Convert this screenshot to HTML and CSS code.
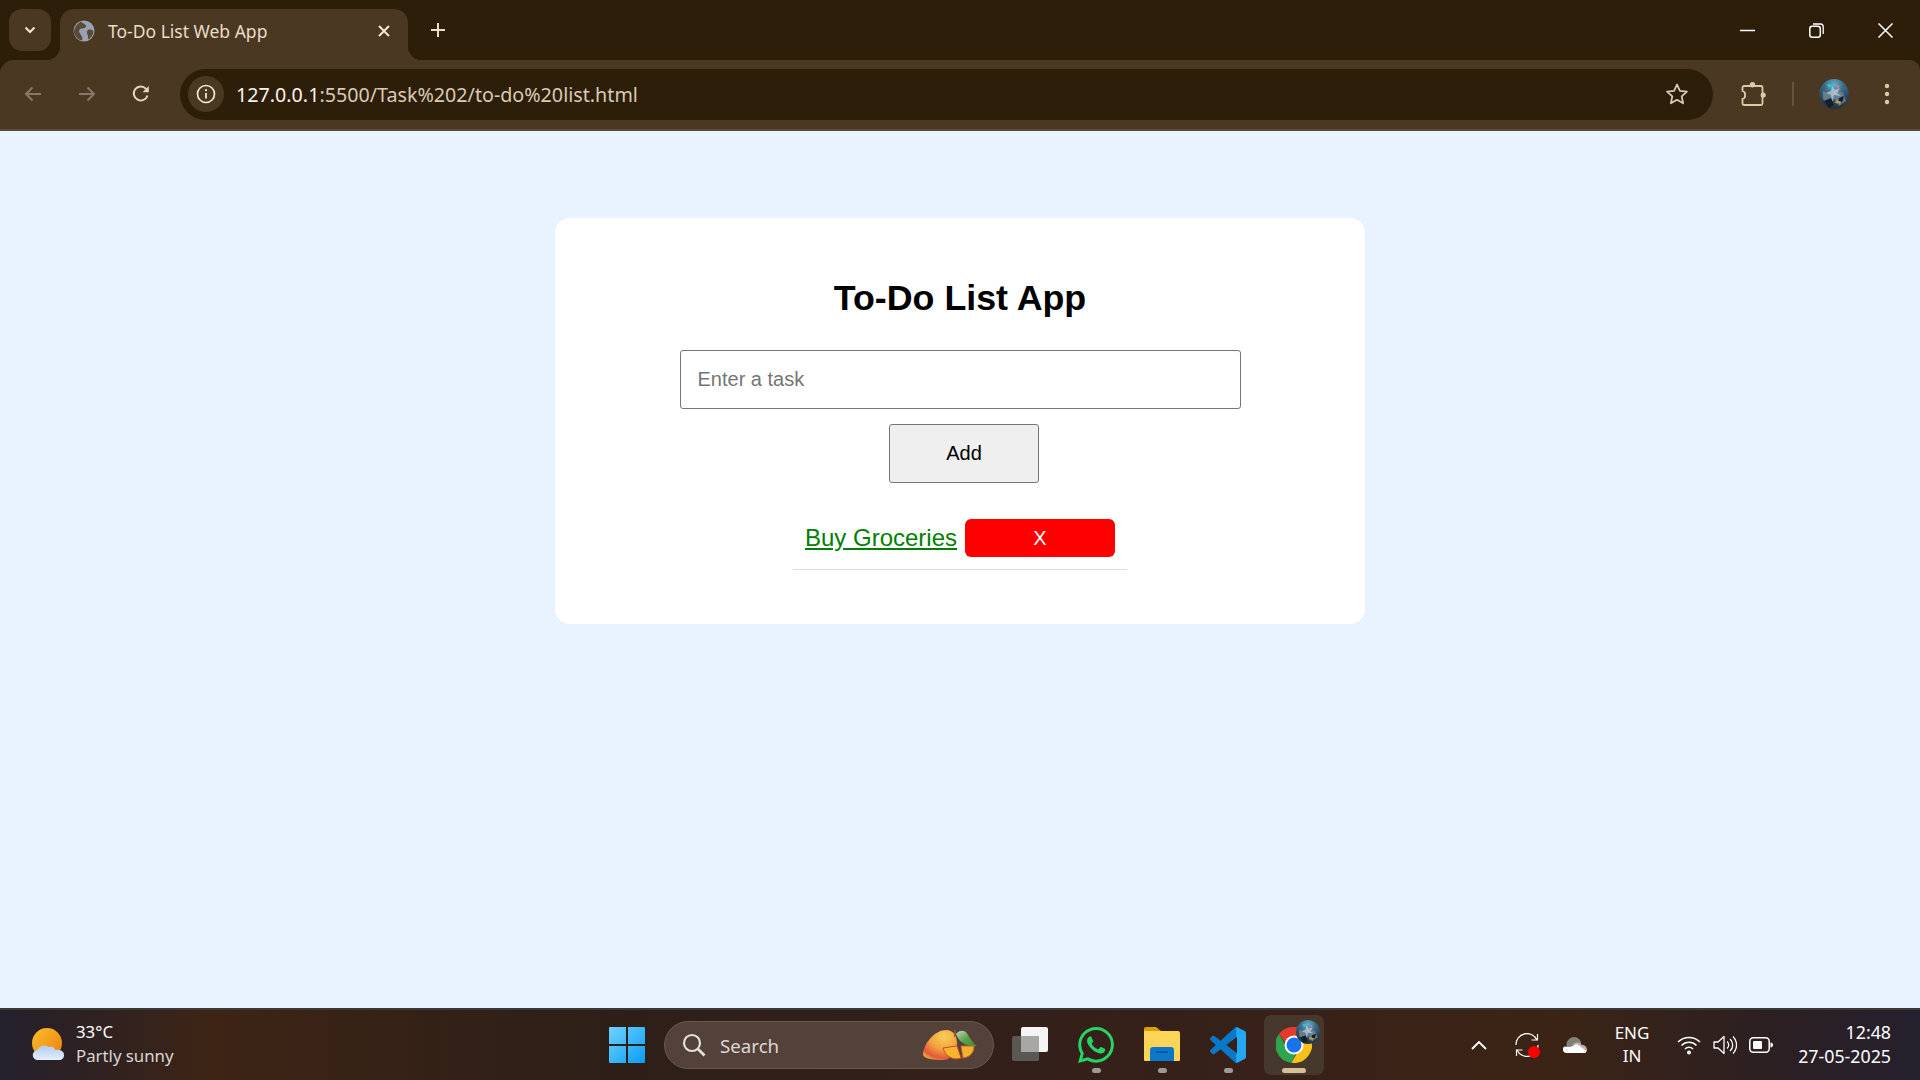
FILE: index.html
```html
<!DOCTYPE html>
<html lang="en">
<head>
  <meta charset="UTF-8">
  <meta name="viewport" content="width=device-width, initial-scale=1">
  <title>To-Do List Web App</title>
  <link rel="stylesheet" href="styles.css">
</head>
<body>
  <svg class="defs" width="0" height="0">
    <defs>
      <radialGradient id="avatarBg" cx="50%" cy="20%" r="85%">
        <stop offset="0" stop-color="#5fb4cc"/>
        <stop offset="0.4" stop-color="#3c6781"/>
        <stop offset="1" stop-color="#1b2835"/>
      </radialGradient>
      <linearGradient id="sunFill" x1="0" y1="0" x2="1" y2="1">
        <stop offset="0" stop-color="#fbc02d"/>
        <stop offset="1" stop-color="#ee7d0b"/>
      </linearGradient>
      <linearGradient id="cloudFill" x1="0" y1="0" x2="0" y2="1">
        <stop offset="0" stop-color="#b0cdf3"/>
        <stop offset="1" stop-color="#e4effc"/>
      </linearGradient>
      <linearGradient id="winFill" x1="0" y1="0" x2="1" y2="1">
        <stop offset="0" stop-color="#6fd3ff"/>
        <stop offset="1" stop-color="#0a9cf5"/>
      </linearGradient>
      <radialGradient id="mangoFill" cx="62%" cy="22%" r="85%">
        <stop offset="0" stop-color="#f7cf55"/>
        <stop offset="0.5" stop-color="#f3a13e"/>
        <stop offset="0.85" stop-color="#e4583a"/>
        <stop offset="1" stop-color="#e9a23a"/>
      </radialGradient>
      <linearGradient id="leafFill" x1="0" y1="0" x2="1" y2="1">
        <stop offset="0" stop-color="#c9d6c4"/>
        <stop offset="0.5" stop-color="#5aa24a"/>
        <stop offset="1" stop-color="#3f8f3a"/>
      </linearGradient>
      <linearGradient id="codeFill" x1="0" y1="0" x2="1" y2="0">
        <stop offset="0" stop-color="#0a78c9"/>
        <stop offset="0.72" stop-color="#0a78c9"/>
        <stop offset="0.74" stop-color="#22a7f2"/>
        <stop offset="1" stop-color="#22a7f2"/>
      </linearGradient>
      <symbol id="avatar" viewBox="0 0 30 30">
        <circle cx="15" cy="15" r="15" fill="url(#avatarBg)"/>
        <path d="M4 12l8 4 5-6 7 4 3 8-7 5-4-7-7 6-5-6z" fill="#75899a" opacity=".75"/>
        <path d="M13 7l3 4 5-2-3 5 4 3-7-1-2 7-1-7-5-2 5-2z" fill="#c3ced7" opacity=".75"/>
        <path d="M5 22l7-3 3 7-5 3zM20 19l5-2-2 7-4 1z" fill="#151f2a"/>
        <path d="M17 21l6 2-2 2-5-1z" fill="#b59a5c"/>
        <circle cx="19" cy="7.500" r="1.400" fill="#e86aa0"/>
        <path d="M8 5l6 1-4 3z" fill="#39c2dc"/>
      </symbol>
    </defs>
  </svg>

  <div class="browser-top">
    <div class="tabstrip">
      <button class="tab-menu">
        <svg width="14" height="14" viewBox="0 0 14 14"><path d="M2.5 4.5L7 9l4.5-4.5" fill="none" stroke="#f3e7d6" stroke-width="2"/></svg>
      </button>
      <div class="tab">
        <svg class="favicon" width="22" height="22" viewBox="0 0 22 22">
          <circle cx="11" cy="11" r="10.500" fill="#98a3b0"/>
          <path d="M8 1.500c1 2 4 2 5 4s-2 3-4 3-4 2-2 5 3 4 2 7c-2 0-6-3-7.500-6S2 5 8 1.500zM15 10c2-1 4 0 5.500 1 0 3-2 6.500-5 8.500-1-2 0-3-1-5s-1-4 .5-4.500z" fill="#5a4a3a"/>
        </svg>
        <span class="tab-title">To-Do List Web App</span>
        <svg class="tab-close" width="12" height="12" viewBox="0 0 12 12"><path d="M1 1l10 10M11 1L1 11" stroke="#f3e7d6" stroke-width="2"/></svg>
      </div>
      <button class="new-tab">
        <svg width="16" height="16" viewBox="0 0 16 16"><path d="M8 1v14M1 8h14" stroke="#eadcc8" stroke-width="2"/></svg>
      </button>
      <div class="window-controls">
        <svg width="15" height="15" viewBox="0 0 15 15"><path d="M0 7.500h15" stroke="#fff" stroke-width="1.500"/></svg>
        <svg width="15" height="15" viewBox="0 0 15 15"><rect x=".8" y="3.300" width="10.500" height="10.900" rx="2.500" fill="none" stroke="#fff" stroke-width="1.500"/><path d="M4 1h7.500A2.800 2.800 0 0 1 14.200 3.800V11" fill="none" stroke="#fff" stroke-width="1.300"/></svg>
        <svg width="15" height="15" viewBox="0 0 15 15"><path d="M.5.500l14 14M14.500.500l-14 14" stroke="#fff" stroke-width="1.500"/></svg>
      </div>
    </div>

    <div class="toolbar">
      <div class="nav-btn">
        <svg width="20" height="20" viewBox="0 0 20 20"><path d="M18 10H3M9.500 3.500L3 10l6.500 6.500" fill="none" stroke="#87786a" stroke-width="2"/></svg>
      </div>
      <div class="nav-btn">
        <svg width="20" height="20" viewBox="0 0 20 20"><path d="M2 10h15M10.500 3.500L17 10l-6.500 6.500" fill="none" stroke="#87786a" stroke-width="2"/></svg>
      </div>
      <div class="nav-btn">
        <svg width="20" height="20" viewBox="0 0 20 20"><path d="M16.500 11.500A7 7 0 1 1 15 4.800L17 7" fill="none" stroke="#e6d3ba" stroke-width="2"/><path d="M17.800 2v6.300h-6.300z" fill="#e6d3ba"/></svg>
      </div>
      <div class="omnibox">
        <div class="site-chip">
          <svg width="20" height="20" viewBox="0 0 20 20"><circle cx="10" cy="10" r="8.500" fill="none" stroke="#f3e7d6" stroke-width="1.700"/><path d="M10 9v5.500" stroke="#f3e7d6" stroke-width="1.800"/><circle cx="10" cy="6.200" r="1.100" fill="#f3e7d6"/></svg>
        </div>
        <div class="url"><span class="url-host">127.0.0.1</span>:5500/Task%202/to-do%20list.html</div>
        <svg class="star" width="24" height="24" viewBox="0 0 24 24"><path d="M12 2.500l2.900 6.400 7 .8-5.200 4.700 1.400 6.900-6.100-3.500-6.100 3.500 1.400-6.900-5.200-4.700 7-.8z" fill="none" stroke="#d8c9b6" stroke-width="1.800" stroke-linejoin="round"/></svg>
      </div>
      <div class="toolbar-actions">
        <svg width="26" height="26" viewBox="0 0 26 26">
          <path d="M4 5h17a1.500 1.500 0 0 1 1.500 1.500v16a1.500 1.500 0 0 1-1.500 1.500H4a1.500 1.500 0 0 1-1.500-1.500V18a3.500 3.500 0 0 0 2.500-4 3.500 3.500 0 0 0-2.500-4V6.500A1.500 1.500 0 0 1 4 5z" fill="none" stroke="#e0c7a6" stroke-width="1.800"/>
          <circle cx="12.500" cy="3.800" r="2.700" fill="#e0c7a6"/>
          <circle cx="23.200" cy="14" r="2.600" fill="#e0c7a6"/>
        </svg>
        <span class="toolbar-divider"></span>
        <svg class="profile" width="30" height="30"><use href="#avatar"/></svg>
        <svg width="6" height="22" viewBox="0 0 6 22"><circle cx="3" cy="3" r="2.200" fill="#e0c7a6"/><circle cx="3" cy="11" r="2.200" fill="#e0c7a6"/><circle cx="3" cy="19" r="2.200" fill="#e0c7a6"/></svg>
      </div>
    </div>
  </div>

  <main class="page">
    <div class="card">
      <h1>To-Do List App</h1>
      <input class="task-input" type="text" placeholder="Enter a task">
      <button class="add-btn">Add</button>
      <ul class="task-list">
        <li>
          <span class="task-text">Buy Groceries</span>
          <button class="delete-btn">X</button>
        </li>
      </ul>
    </div>
  </main>

  <footer class="taskbar">
    <div class="weather">
      <svg width="36" height="36" viewBox="0 0 36 36">
        <circle cx="17" cy="16" r="15" fill="url(#sunFill)"/>
        <path d="M8 33a5 5 0 0 1-.5-10c1.500-4 7-6 11-3 3-1.500 6 0 6.500 3 6-1 9.500 2 9 5.500 0 2.500-2 4.500-4.500 4.500z" fill="url(#cloudFill)"/>
      </svg>
      <div class="weather-text">
        <div class="temp">33°C</div>
        <div class="sky">Partly sunny</div>
      </div>
    </div>

    <div class="task-icons">
      <svg class="win-logo" width="36" height="36" viewBox="0 0 36 36">
        <path d="M1 0h16v17H0V1a1 1 0 0 1 1-1zM19 0h16a1 1 0 0 1 1 1v16H19zM0 19h17v17H1a1 1 0 0 1-1-1zM19 19h17v16a1 1 0 0 1-1 1H19z" fill="url(#winFill)"/>
      </svg>
      <div class="search-box">
        <svg width="24" height="24" viewBox="0 0 24 24"><circle cx="10" cy="10" r="8" fill="none" stroke="#e4e0dc" stroke-width="2.200"/><path d="M16 16l6.500 6.500" stroke="#e4e0dc" stroke-width="2.600"/></svg>
        <span class="search-label">Search</span>
        <svg class="mango" width="58" height="32" viewBox="0 0 58 32">
          <path d="M1 24C3 12 14 1 24 1c8 0 11 7 11 14 0 10-6 15-14 16C11 31 0 30 1 24z" fill="url(#mangoFill)"/>
          <path d="M34 5c4-5 10-4 12 1 2 4 7 10 9 11-9 1-18-3-21-12z" fill="url(#leafFill)"/>
          <path d="M32 1l1.500 0 .5 6-2 1z" fill="#8a5a2a"/>
          <path d="M21 19l14-2 4 12c-8 3-16-2-18-10z" fill="#f6b52c" stroke="#d9482a" stroke-width="1"/>
          <path d="M39 17h13c0 7-4 11-11 12z" fill="#f2b02d" stroke="#c9612a" stroke-width="1"/>
        </svg>
      </div>
      <svg class="task-view" width="36" height="36" viewBox="0 0 36 36">
        <rect x="0" y="9" width="27" height="25" rx="2" fill="#5a5755"/>
        <rect x="9" y="0" width="27" height="25" rx="2" fill="#f4f4f4"/>
        <rect x="9" y="9" width="18" height="16" fill="#a9a7a5"/>
      </svg>
      <div class="app-icon has-dot">
        <svg width="36" height="36" viewBox="0 0 24 24"><path fill="#25d366" d="M17.472 14.382c-.297-.149-1.758-.867-2.030-.967-.273-.099-.471-.148-.67.150-.197.297-.767.966-.940 1.164-.173.199-.347.223-.644.075-.297-.150-1.255-.463-2.390-1.475-.883-.788-1.480-1.761-1.653-2.059-.173-.297-.018-.458.130-.606.134-.133.298-.347.446-.520.149-.174.198-.298.298-.497.099-.198.050-.371-.025-.520-.075-.149-.669-1.612-.916-2.207-.242-.579-.487-.500-.669-.510-.173-.008-.371-.010-.570-.010-.198 0-.520.074-.792.372-.272.297-1.040 1.016-1.040 2.479 0 1.462 1.065 2.875 1.213 3.074.149.198 2.096 3.200 5.077 4.487.709.306 1.262.489 1.694.625.712.227 1.360.195 1.871.118.571-.085 1.758-.719 2.006-1.413.248-.694.248-1.289.173-1.413-.074-.124-.272-.198-.570-.347m-5.421 7.403h-.004a9.870 9.870 0 01-5.031-1.378l-.361-.214-3.741.982.998-3.648-.235-.374a9.860 9.860 0 01-1.510-5.260c.001-5.450 4.436-9.884 9.888-9.884 2.640 0 5.122 1.030 6.988 2.898a9.825 9.825 0 012.893 6.994c-.003 5.450-4.437 9.884-9.885 9.884m8.413-18.297A11.815 11.815 0 0012.050 0C5.495 0 .160 5.335.157 11.892c0 2.096.547 4.142 1.588 5.945L.057 24l6.305-1.654a11.882 11.882 0 005.683 1.448h.005c6.554 0 11.890-5.335 11.893-11.893a11.821 11.821 0 00-3.480-8.413Z"/></svg>
      </div>
      <div class="app-icon has-dot">
        <svg width="36" height="36" viewBox="0 0 36 36">
          <path d="M0 2a2 2 0 0 1 2-2h10l5 4h-17z" fill="#d99e0b"/>
          <path d="M0 4h34a2 2 0 0 1 2 2v27a1 1 0 0 1-1 1H1a1 1 0 0 1-1-1z" fill="#fcd558"/>
          <path d="M6 34v-11a3 3 0 0 1 3-3h18a3 3 0 0 1 3 3v11z" fill="#0b78c9"/>
          <path d="M12 25h12" stroke="#0a4f8f" stroke-width="1.500"/>
        </svg>
      </div>
      <div class="app-icon has-dot">
        <svg width="36" height="36" viewBox="0 0 24 24"><path fill="url(#codeFill)" d="M23.150 2.587L18.210.210a1.494 1.494 0 0 0-1.705.290l-9.460 8.630-4.120-3.128a.999.999 0 0 0-1.276.057L.327 7.261A1 1 0 0 0 .326 8.740L3.899 12 .326 15.260a1 1 0 0 0 .001 1.479L1.650 17.940a.999.999 0 0 0 1.276.057l4.120-3.128 9.460 8.630a1.492 1.492 0 0 0 1.704.290l4.942-2.377A1.500 1.500 0 0 0 24 20.060V3.939a1.500 1.500 0 0 0-.850-1.352zm-5.146 14.861L10.826 12l7.178-5.448v10.896z"/></svg>
      </div>
      <div class="app-icon active">
        <svg width="36" height="36" viewBox="0 0 36 36">
          <path d="M18 0a18 18 0 0 1 15.600 9H18a9 9 0 0 0-8.700 6.700L3 7A18 18 0 0 1 18 0z" fill="#e33b2e"/>
          <path d="M3 7l7.800 13.500A9 9 0 0 0 20 26.800L15.500 35.800A18 18 0 0 1 3 7z" fill="#2ea44f"/>
          <path d="M33.600 9A18 18 0 0 1 15.500 35.800l7.800-13.500A9 9 0 0 0 24.500 9z" fill="#fbc116"/>
          <circle cx="18" cy="18" r="9.500" fill="#fff"/>
          <circle cx="18" cy="18" r="7.500" fill="#1a73e8"/>
        </svg>
        <svg class="chrome-badge" width="24" height="24"><use href="#avatar"/></svg>
      </div>
    </div>

    <div class="tray">
      <svg class="tray-chevron" width="16" height="10" viewBox="0 0 16 10"><path d="M1 9l7-7 7 7" fill="none" stroke="#fff" stroke-width="1.800"/></svg>
      <div class="sync-icon">
        <svg width="24" height="24" viewBox="0 0 24 24"><path d="M1 12A11 11 0 0 1 22 7M23 12A11 11 0 0 1 2 17" fill="none" stroke="#fff" stroke-width="1.200"/><path d="M22.500 1v6h-6M1.500 23v-6h6" fill="none" stroke="#fff" stroke-width="1.200"/></svg>
        <span class="rec-dot"></span>
      </div>
      <svg class="onedrive" width="24" height="16" viewBox="0 0 24 16">
        <path d="M4 10a7 7 0 0 1 14-5v5z" fill="#86807b"/>
        <path d="M10 7a6 6 0 0 1 9 1c3 0 5 2 5 5v1H14z" fill="#b9b3ae"/>
        <path d="M3 16a3.500 3.500 0 0 1-1.500-6.500L7 10l7-3 9.500 7c0 1-1 2-2 2z" fill="#fff"/>
      </svg>
      <div class="lang"><div>ENG</div><div>IN</div></div>
      <div class="status-icons">
        <svg width="24" height="20" viewBox="0 0 24 20"><path d="M1 7a15.500 15.500 0 0 1 22 0M4.500 10.500a10.500 10.500 0 0 1 15 0M8 14a5.500 5.500 0 0 1 8 0" fill="none" stroke="#fff" stroke-width="1.500"/><circle cx="12" cy="17.500" r="2" fill="#fff"/></svg>
        <svg width="24" height="20" viewBox="0 0 24 20"><path d="M1 7h4l6-5.500v17L5 13H1z" fill="none" stroke="#fff" stroke-width="1.300" stroke-linejoin="round"/><path d="M14 6.500a4.500 4.500 0 0 1 0 7M17 4a8 8 0 0 1 0 12M20 1.500a12 12 0 0 1 0 17" fill="none" stroke="#fff" stroke-width="1.300"/></svg>
        <svg width="24" height="16" viewBox="0 0 24 16"><rect x=".8" y=".8" width="19.400" height="14.400" rx="3.500" fill="none" stroke="#fff" stroke-width="1.500"/><rect x="4" y="4" width="9" height="8" rx="1" fill="#fff"/><path d="M21.500 5.500c1.500 0 2.500 1 2.500 2.500s-1 2.500-2.500 2.500z" fill="#fff"/></svg>
      </div>
      <div class="clock"><div>12:48</div><div>27-05-2025</div></div>
    </div>
  </footer>
</body>
</html>
```

FILE: styles.css
```css
* {
  box-sizing: border-box;
}
html, body {
  height: 100%;
}
body {
  margin: 0;
  display: flex;
  flex-direction: column;
  overflow: hidden;
  font-family: "Liberation Sans", Arial, sans-serif;
  background: #e8f3ff;
}
.defs {
  position: absolute;
}

/* browser chrome */
.browser-top {
  height: 131px;
  flex: none;
  background: #2d1e0a;
}
.tabstrip {
  height: 60px;
  display: flex;
  align-items: flex-start;
  padding: 9px 0 0 9px;
}
.tab-menu {
  width: 42px;
  height: 42px;
  background: #4a3822;
  border: none;
  border-radius: 13px;
  display: flex;
  align-items: center;
  justify-content: center;
  padding: 0;
}
.tab {
  position: relative;
  width: 348px;
  height: 51px;
  margin-left: 9px;
  padding: 0 18px 8px 13px;
  background: #4a3822;
  border-radius: 14px 14px 0 0;
  display: flex;
  align-items: center;
}
.tab::after {
  content: "";
  position: absolute;
  right: -14px;
  bottom: 0;
  width: 14px;
  height: 14px;
  background: radial-gradient(circle at 100% 0, transparent 14px, #4a3822 14.500px);
}
.tab::before {
  content: "";
  position: absolute;
  left: -14px;
  bottom: 0;
  width: 14px;
  height: 14px;
  background: radial-gradient(circle at 0 0, transparent 14px, #4a3822 14.500px);
}
.favicon {
  flex: none;
}
.tab-title {
  flex: 1;
  margin-left: 13px;
  color: #eadcc8;
  font: 17.500px "Noto Sans", sans-serif;
  white-space: nowrap;
}
.new-tab {
  width: 30px;
  height: 42px;
  margin-left: 15px;
  background: none;
  border: none;
  padding: 0;
  display: flex;
  align-items: center;
  justify-content: center;
}
.window-controls {
  margin-left: auto;
  height: 42px;
  padding-right: 27px;
  display: flex;
  align-items: center;
  gap: 54px;
}
.toolbar {
  position: relative;
  height: 71px;
  padding: 9px 0 10px 11px;
  background: #4a3822;
  border-bottom: 2px solid #5a4a38;
  border-radius: 14px 10px 0 0;
  display: flex;
  align-items: center;
}
.nav-btn {
  width: 44px;
  height: 44px;
  margin-right: 10px;
  display: flex;
  align-items: center;
  justify-content: center;
  flex: none;
}
.omnibox {
  width: 1533px;
  height: 51px;
  margin-left: 7px;
  padding: 0 24px 0 8px;
  flex: none;
  background: #2d1e0a;
  border-radius: 26px;
  display: flex;
  align-items: center;
}
.site-chip {
  width: 36px;
  height: 36px;
  flex: none;
  border-radius: 50%;
  background: #4a3822;
  display: flex;
  align-items: center;
  justify-content: center;
}
.url {
  flex: 1;
  margin-left: 12px;
  color: #d9cab5;
  font: 19.700px "Noto Sans", sans-serif;
  white-space: nowrap;
}
.url-host {
  color: #fbf3e8;
}
.toolbar-actions {
  display: flex;
  align-items: center;
  margin-left: 27px;
}
.toolbar-divider {
  width: 2px;
  height: 24px;
  margin: 0 25px 0 26px;
  background: #66543e;
}
.profile {
  margin-right: 35px;
}

/* page */
.page {
  flex: 1;
  min-height: 0;
  padding-top: 87px;
  background: #e8f3ff;
}
.card {
  width: 810px;
  height: 406px;
  margin: 0 auto;
  padding-top: 60px;
  background: #fff;
  border-radius: 15px;
  display: flex;
  flex-direction: column;
  align-items: center;
}
h1 {
  margin: 0 0 31px;
  font-size: 35.800px;
  line-height: 41px;
  font-weight: bold;
  color: #000;
}
.task-input {
  width: 561px;
  height: 59px;
  padding: 0 17px;
  font: 20px "Liberation Sans", Arial, sans-serif;
  border: 1px solid #767676;
  border-radius: 3px;
  background: #fff;
  flex: none;
}
.task-input::placeholder {
  color: #757575;
}
.add-btn {
  width: 150px;
  height: 59px;
  margin: 15px 0 0 8px;
  flex: none;
  font: 20px "Liberation Sans", Arial, sans-serif;
  color: #000;
  background: #efefef;
  border: 1px solid #767676;
  border-radius: 3px;
}
.task-list {
  list-style: none;
  margin: 24px 0 0;
  padding: 0;
}
.task-list li {
  display: flex;
  align-items: center;
  gap: 8px;
  padding: 12px 12px 12px;
  border-bottom: 1px solid #ddd;
}
.task-text {
  font-size: 24px;
  color: green;
  text-decoration: underline;
}
.delete-btn {
  width: 150px;
  height: 38px;
  padding: 0;
  font: 20px "Liberation Sans", Arial, sans-serif;
  color: #fff;
  background: #f00;
  border: none;
  border-radius: 6px;
}

/* taskbar */
.taskbar {
  height: 72px;
  flex: none;
  display: flex;
  align-items: center;
  color: #fff;
  font-family: "Noto Sans", sans-serif;
  border-top: 2px solid #3b3936;
  background: linear-gradient(90deg, #24202c 0, #3d2415 11%, #2d1f18 32%, #35201a 58%, #3b2415 81%, #2a1f25 94%, #25202d 100%);
}
.weather {
  width: 609px;
  padding-left: 30px;
  flex: none;
  display: flex;
  align-items: center;
  gap: 10px;
}
.weather-text {
  font-size: 16.800px;
  line-height: 24px;
  margin-top: -2px;
}
.sky {
  color: #d9d6d4;
}
.task-icons {
  display: flex;
  align-items: center;
  width: 725px;
  flex: none;
}
.win-logo {
  flex: none;
}
.search-box {
  width: 330px;
  height: 48px;
  margin-left: 19px;
  padding: 0 13px 0 17px;
  flex: none;
  display: flex;
  align-items: center;
  background: #54423a;
  border: 1px solid #685850;
  border-radius: 24px;
}
.search-label {
  flex: 1;
  margin-left: 14px;
  font-size: 18.700px;
  color: #dcd8d4;
}
.task-view {
  flex: none;
  margin-left: 18px;
}
.app-icon {
  position: relative;
  width: 60px;
  height: 60px;
  margin-left: 6px;
  flex: none;
  border-radius: 7px;
  display: flex;
  align-items: center;
  justify-content: center;
}
.task-view + .app-icon {
  margin-left: 18px;
}
.has-dot::after {
  content: "";
  position: absolute;
  left: 26px;
  bottom: 2px;
  width: 9px;
  height: 5px;
  border-radius: 3px;
  background: #a09a96;
}
.active {
  background: #46382c;
}
.active::after {
  content: "";
  position: absolute;
  left: 18px;
  bottom: 2px;
  width: 24px;
  height: 5px;
  border-radius: 3px;
  background: #d8bf98;
}
.chrome-badge {
  position: absolute;
  right: 4px;
  top: 5px;
}
.tray {
  flex: 1;
  padding-left: 137px;
  display: flex;
  align-items: center;
}
.tray-chevron {
  flex: none;
}
.sync-icon {
  position: relative;
  width: 24px;
  height: 24px;
  margin-left: 28px;
  flex: none;
}
.rec-dot {
  position: absolute;
  right: -1px;
  bottom: -1px;
  width: 12px;
  height: 12px;
  border-radius: 50%;
  background: #f00;
}
.onedrive {
  margin-left: 24px;
  flex: none;
}
.lang {
  width: 60px;
  margin-left: 15px;
  text-align: center;
  font-size: 17px;
  line-height: 23px;
  margin-top: -2px;
}
.status-icons {
  margin-left: 15px;
  display: flex;
  align-items: center;
  gap: 12px;
}
.clock {
  flex: 1;
  padding-right: 29px;
  text-align: right;
  font-size: 17.800px;
  line-height: 24px;
  margin-top: -2px;
}
```
